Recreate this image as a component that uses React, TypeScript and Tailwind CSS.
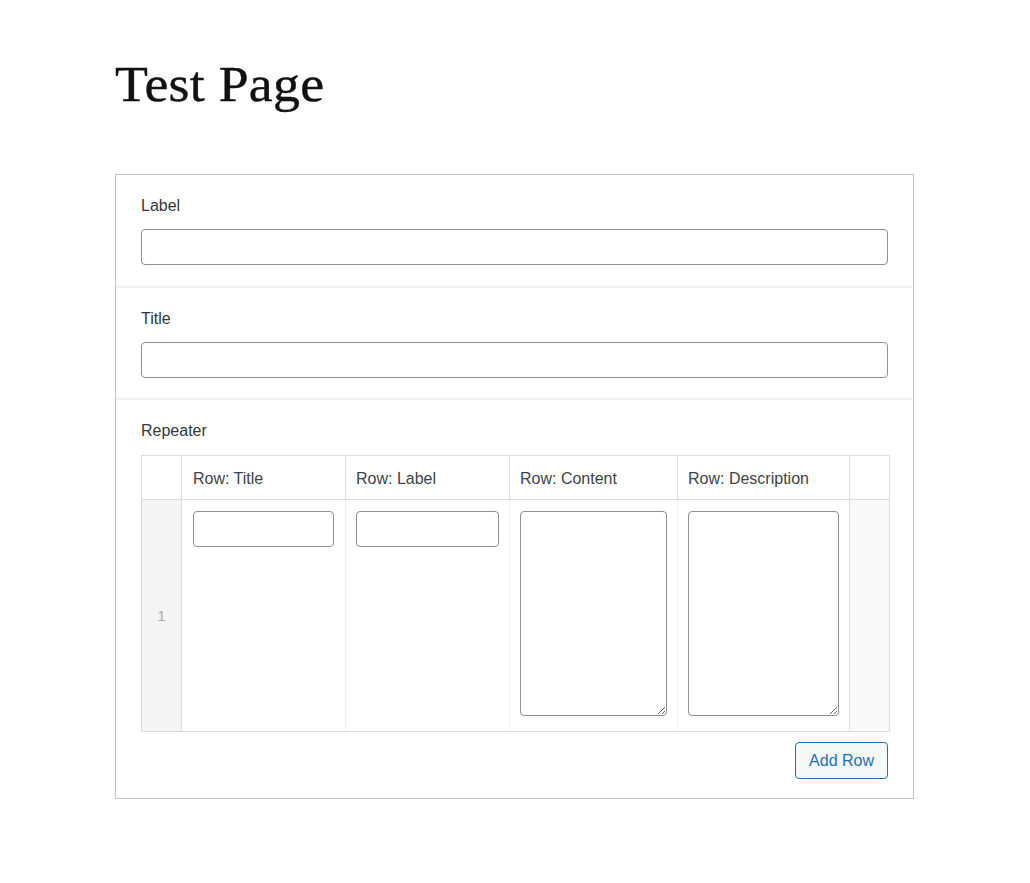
export default function App() {
  const sans = { fontFamily: '"Liberation Sans", Arial, sans-serif' };
  return (
    <div className="min-h-[883px] bg-white" style={sans}>
      <div className="pl-[115px] pr-[116px] pt-[52px]">
        <h1
          className="text-[51px] leading-[64px] tracking-[0.005em] text-[#111] pb-[58px] origin-left scale-x-[1.055]"
          style={{ fontFamily: '"Liberation Serif", "Times New Roman", serif', WebkitTextStroke: '0.4px #111' }}
        >
          Test Page
        </h1>

        {/* Field group */}
        <div className="border border-[#c3c4c7] bg-white">
          {/* Label */}
          <div className="px-[25px] pt-[21px] pb-[21px] border-b-2 border-[#f0f0f1]">
            <label className="block text-[16px] leading-5 text-[#32373c] mb-[13px]">Label</label>
            <input className="block w-full h-9 rounded-[4px] border border-[#8c8f94] bg-white" />
          </div>

          {/* Title */}
          <div className="px-[25px] pt-[21px] pb-[20px] border-b-2 border-[#f0f0f1]">
            <label className="block text-[16px] leading-5 text-[#32373c] mb-[13px]">Title</label>
            <input className="block w-full h-9 rounded-[4px] border border-[#8c8f94] bg-white" />
          </div>

          {/* Repeater */}
          <div className="pl-[25px] pr-[23px] pt-[21px] pb-[19px]">
            <label className="block text-[16px] leading-5 text-[#32373c] mb-[14px]">Repeater</label>
            <div className="border border-[#dcdcde]">
              <div className="grid grid-cols-[40px_164px_164px_168px_172px_1fr] h-[44px] border-b border-[#dcdcde] text-[16px] text-[#3c434a]">
                <div className="border-r border-[#dcdcde]" />
                <div className="flex items-center pt-[2px] px-[11px] border-r border-[#dcdcde]">Row: Title</div>
                <div className="flex items-center pt-[2px] px-[10px] border-r border-[#dcdcde]">Row: Label</div>
                <div className="flex items-center pt-[2px] px-[10px] border-r border-[#dcdcde]">Row: Content</div>
                <div className="flex items-center pt-[2px] px-[10px] border-r border-[#dcdcde]">Row: Description</div>
                <div />
              </div>
              <div className="grid grid-cols-[40px_164px_164px_168px_172px_1fr] h-[231px]">
                <div className="flex items-center justify-center pt-[2px] bg-[#f4f4f4] border-r border-[#dcdcde] text-[15px] text-[#a7aaad]">1</div>
                <div className="px-[11px] pt-[11px] border-r border-[#f0f0f1]">
                  <input className="block w-full h-9 rounded-[4px] border border-[#8c8f94] bg-white" />
                </div>
                <div className="px-[10px] pt-[11px] border-r border-[#f0f0f1]">
                  <input className="block w-full h-9 rounded-[4px] border border-[#8c8f94] bg-white" />
                </div>
                <div className="px-[10px] pt-[11px] border-r border-[#f0f0f1]">
                  <textarea className="block w-full h-[205px] rounded-[4px] border border-[#8c8f94] bg-white" />
                </div>
                <div className="px-[10px] pt-[11px] border-r border-[#dcdcde]">
                  <textarea className="block w-full h-[205px] rounded-[4px] border border-[#8c8f94] bg-white" />
                </div>
                <div className="bg-[#f9f9f9]" />
              </div>
            </div>
            <div className="flex justify-end mt-[10px] pr-[2px]">
              <button className="h-[37px] px-[13px] rounded-[4px] border border-[#2271b1] bg-[#f6f7f7] text-[#2271b1] text-[16px]">
                Add Row
              </button>
            </div>
          </div>
        </div>
      </div>
    </div>
  );
}
